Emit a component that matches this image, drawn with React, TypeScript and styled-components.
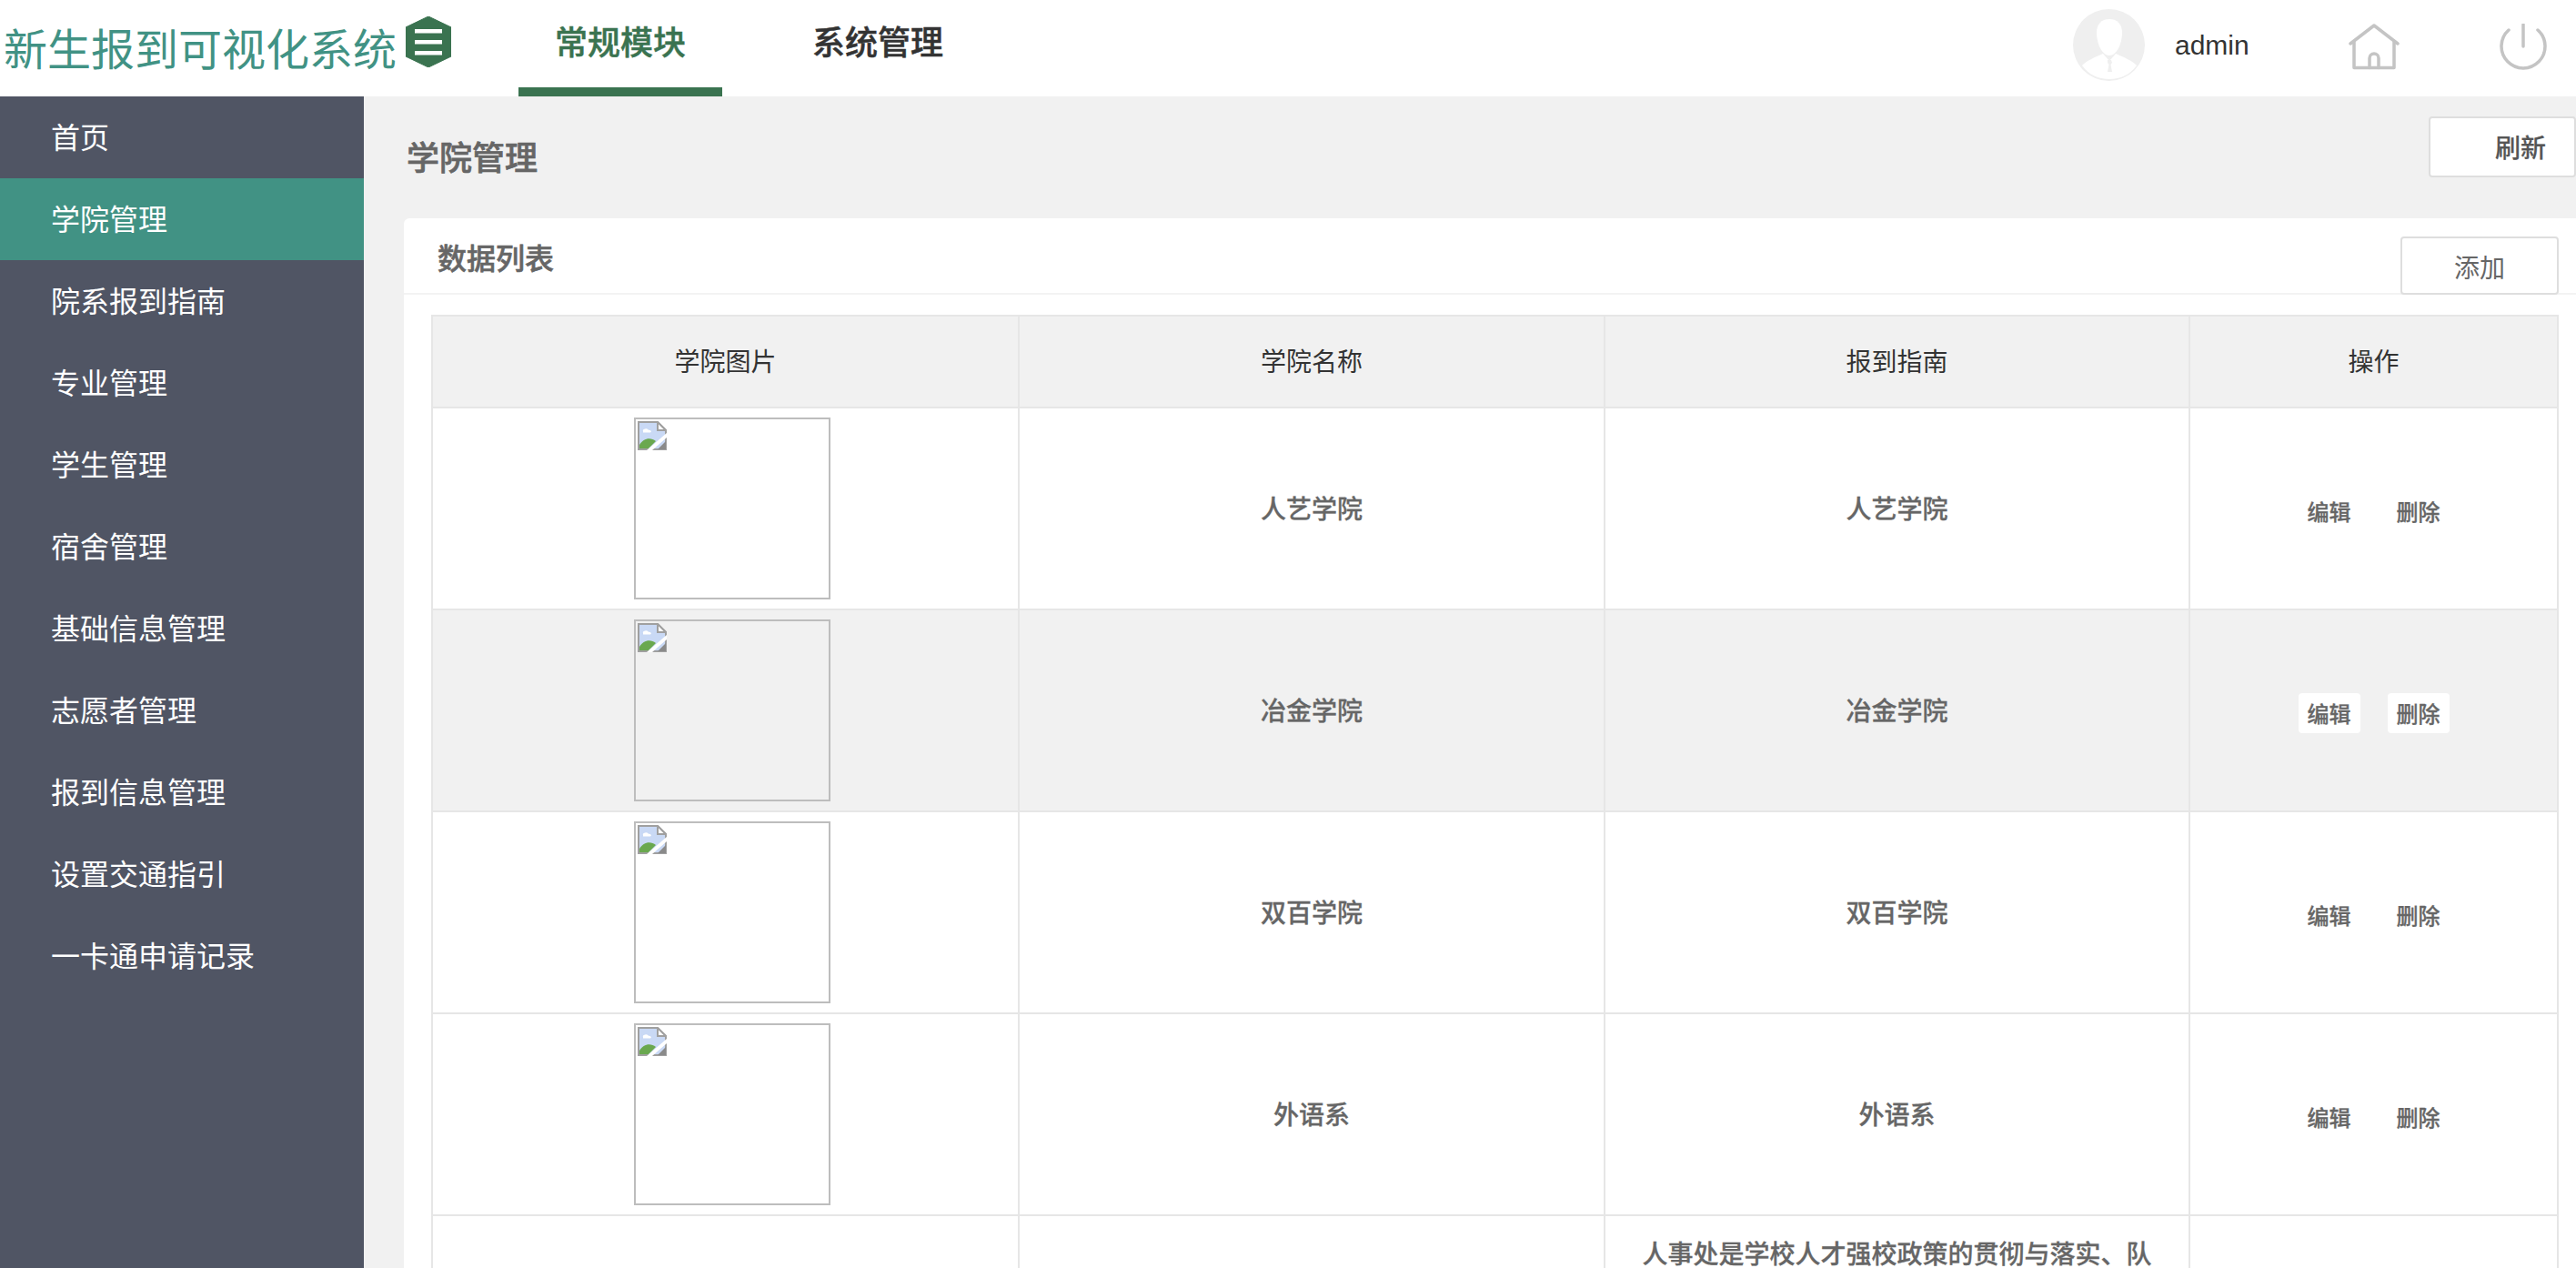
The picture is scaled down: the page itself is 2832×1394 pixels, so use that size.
import * as React from "react";
import styled, { createGlobalStyle } from "styled-components";

const cjk = `"Noto Sans CJK SC", "Liberation Sans", sans-serif`;

const GlobalStyle = createGlobalStyle`
  html, body {
    margin: 0;
    height: 100%;
    overflow: hidden;
    background: #f1f1f1;
    font-family: ${cjk};
  }
`;

const Page = styled.div`
  display: flex;
  flex-direction: column;
  height: 1394px;
  overflow: hidden;
`;

const Header = styled.header`
  display: flex;
  align-items: stretch;
  flex: 0 0 106px;
  background: #fff;
`;

const Brand = styled.div`
  display: flex;
  align-items: flex-start;
  width: 570px;
  padding-left: 4px;
  box-sizing: border-box;
`;

const BrandName = styled.div`
  font-size: 48px;
  line-height: 48px;
  margin-top: 27px;
  color: #419284;
`;

const BrandMark = styled.svg`
  width: 50px;
  height: 56px;
  margin: 18px 0 0 10px;
`;

const Tab = styled.div<{ $active?: boolean }>`
  box-sizing: border-box;
  width: 224px;
  margin-right: 59px;
  text-align: center;
  font-size: 36px;
  font-weight: 500;
  line-height: 36px;
  padding-top: 26px;
  color: ${(p) => (p.$active ? "#3a7350" : "#333")};
  -webkit-text-stroke: 0.5px currentColor;
  border-bottom: 10px solid ${(p) => (p.$active ? "#3a7350" : "transparent")};
`;

const HeaderRight = styled.div`
  display: flex;
  align-items: center;
  margin-left: auto;
`;

const Avatar = styled.svg`
  width: 79px;
  height: 79px;
  margin: 0 33px 7px 0;
`;

const UserName = styled.span`
  font-family: "Liberation Sans", sans-serif;
  font-size: 30px;
  color: #333;
  width: 191px;
  margin-bottom: 6px;
`;

const HomeIcon = styled.svg`
  width: 56px;
  height: 54px;
  margin-right: 110px;
`;

const PowerIcon = styled.svg`
  width: 52px;
  height: 54px;
  margin-right: 32px;
`;

const Body = styled.div`
  display: flex;
  flex: 1;
  min-height: 0;
`;

const Sidebar = styled.nav`
  flex: 0 0 400px;
  background: #505564;
`;

const SideItem = styled.div<{ $active?: boolean }>`
  height: 90px;
  line-height: 86px;
  padding-left: 56px;
  font-size: 32px;
  color: #fff;
  background: ${(p) => (p.$active ? "#419284" : "transparent")};
`;

const Main = styled.main`
  flex: 1;
  min-width: 0;
  padding-left: 44px;
  overflow: hidden;
`;

const TitleBar = styled.div`
  display: flex;
  align-items: flex-start;
  justify-content: space-between;
  height: 134px;
  padding-left: 3px;
`;

const PageTitle = styled.h1`
  margin: 44px 0 0;
  font-size: 36px;
  line-height: 42px;
  font-weight: 500;
  color: #666;
  -webkit-text-stroke: 0.7px currentColor;
`;

const RefreshButton = styled.div`
  box-sizing: border-box;
  width: 162px;
  height: 67px;
  margin-top: 22px;
  padding-left: 71px;
  line-height: 63px;
  font-size: 28px;
  font-weight: 500;
  color: #555;
  -webkit-text-stroke: 0.2px currentColor;
  background: #fff;
  border: 2px solid #dedede;
  border-radius: 4px;
`;

const Card = styled.section`
  background: #fff;
  border-radius: 6px 0 0 0;
  padding-bottom: 40px;
`;

const CardHeader = styled.div`
  display: flex;
  align-items: flex-start;
  justify-content: space-between;
  height: 84px;
  padding: 20px 19px 0 37px;
  box-sizing: border-box;
  border-bottom: 2px solid #f3f3f3;
`;

const CardTitle = styled.h2`
  margin: 2px 0 0;
  font-size: 32px;
  line-height: 40px;
  font-weight: 500;
  color: #666;
  -webkit-text-stroke: 0.6px currentColor;
`;

const AddButton = styled.div`
  box-sizing: border-box;
  width: 174px;
  height: 64px;
  text-align: center;
  line-height: 62px;
  font-size: 28px;
  color: #666;
  background: #fff;
  border: 2px solid #dedede;
  border-radius: 4px;
`;

const TableWrap = styled.div`
  padding: 22px 19px 0 30px;
`;

const Table = styled.table`
  width: 100%;
  table-layout: fixed;
  border-collapse: collapse;
  font-size: 28px;
  text-align: center;
  th, td {
    border: 2px solid #e6e6e6;
    padding: 0;
  }
  th:nth-child(1) { width: 643px; }
  th:nth-child(2) { width: 642px; }
  th:nth-child(3) { width: 641px; }
`;

const HeadCell = styled.th`
  height: 69px;
  font-weight: 400;
  color: #333;
  background: #f1f1f1;
  line-height: 36px;
  vertical-align: top;
  padding-top: 30px !important;
`;

const Row = styled.tr<{ $shaded?: boolean }>`
  height: 222px;
  background: ${(p) => (p.$shaded ? "#f1f1f1" : "#fff")};
`;

const TextCell = styled.td`
  color: #666;
  font-weight: 500;
  -webkit-text-stroke: 0.3px currentColor;
  padding-bottom: 3px !important;
`;

const LongTextCell = styled(TextCell)`
  vertical-align: top;
  padding: 18px 30px 0 !important;
  line-height: 44px;
`;

const Picture = styled.div`
  box-sizing: border-box;
  width: 216px;
  height: 200px;
  margin: 0 0 0 221px;
  padding: 2px;
  border: 2px solid #bdbdbd;
`;

const BrokenIcon = styled.svg`
  display: block;
  width: 32px;
  height: 32px;
`;

const ActionRow = styled.div`
  display: flex;
  justify-content: center;
  gap: 30px;
  padding-top: 5px;
`;

const ActionButton = styled.span<{ $raised?: boolean }>`
  width: 68px;
  height: 44px;
  line-height: 44px;
  font-size: 24px;
  font-weight: 500;
  color: #666;
  -webkit-text-stroke: 0.3px currentColor;
  border-radius: 4px;
  background: ${(p) => (p.$raised ? "#fff" : "transparent")};
`;

const menu = [
  "首页",
  "学院管理",
  "院系报到指南",
  "专业管理",
  "学生管理",
  "宿舍管理",
  "基础信息管理",
  "志愿者管理",
  "报到信息管理",
  "设置交通指引",
  "一卡通申请记录",
];

const colleges = ["人艺学院", "冶金学院", "双百学院", "外语系"];

function Broken() {
  return (
    <BrokenIcon viewBox="0 0 16 16">
      <path d="M0.5 0.5H11L15.5 5V15.5H0.5Z" fill="#c9d9f5" stroke="#a0a0a0" />
      <path d="M11 0.5V5H15.5Z" fill="#fff" stroke="#a0a0a0" />
      <path d="M3 5.5a1.5 1 0 0 1 3-.6a1.2 .8 0 0 1 1 1.4H3Z" fill="#fff" />
      <path d="M1 15V13C3 9.5 7 8.5 10 11L6 15Z" fill="#6aa84f" />
      <path d="M5 16L16 6.5V9L8 16Z" fill="#fff" />
      <path d="M11 15.5L15.5 11V15.5Z" fill="#8a8a8a" />
    </BrokenIcon>
  );
}

export default function App() {
  return (
    <Page>
      <GlobalStyle />
      <Header>
        <Brand>
          <BrandName>新生报到可视化系统</BrandName>
          <BrandMark viewBox="0 0 50 56">
            <path d="M25 0L50 12V44L25 56L0 44V12Z" fill="#3a7350" stroke="#3a7350" strokeLinejoin="round" />
            <rect x="10" y="14" width="30" height="4.500" fill="#fff" />
            <rect x="10" y="26" width="30" height="4.500" fill="#fff" />
            <rect x="10" y="38" width="30" height="4.500" fill="#fff" />
          </BrandMark>
        </Brand>
        <Tab $active>常规模块</Tab>
        <Tab>系统管理</Tab>
        <HeaderRight>
          <Avatar viewBox="0 0 79 79">
            <circle cx="39.5" cy="39.5" r="39.5" fill="#efefef" />
            <path d="M40 11c9 0 14 6 14 15c0 12-6 25-14 25s-14-13-14-25c0-9 5-15 14-15Z" fill="#fff" />
            <path d="M10 62c4-5 14-9 23-13l7 8l7-8c9 4 19 8 23 13c-7 10-18 15-30 15S17 72 10 62Z" fill="#fff" />
            <path d="M38 56h4l1 3l-1.500 2l1.500 8h-5l1.500-8l-1.500-2Z" fill="#efefef" />
          </Avatar>
          <UserName>admin</UserName>
          <HomeIcon viewBox="0 0 56 54" fill="none" stroke="#c4c4c4" strokeWidth="3.500" strokeLinejoin="round" strokeLinecap="round">
            <path d="M2 22L28 2L54 22" />
            <path d="M6 20V48.500H50V20" />
            <path d="M23 48.500V38a5 5 0 0 1 10 0V48.500" />
          </HomeIcon>
          <PowerIcon viewBox="0 0 52 54" fill="none" stroke="#c4c4c4" strokeWidth="3.500" strokeLinecap="round">
            <path d="M26 1V25" />
            <path d="M10 7A24 24 0 1 0 42 7" />
          </PowerIcon>
        </HeaderRight>
      </Header>
      <Body>
        <Sidebar>
          {menu.map((label) => (
            <SideItem key={label} $active={label === "学院管理"}>
              {label}
            </SideItem>
          ))}
        </Sidebar>
        <Main>
          <TitleBar>
            <PageTitle>学院管理</PageTitle>
            <RefreshButton>刷新</RefreshButton>
          </TitleBar>
          <Card>
            <CardHeader>
              <CardTitle>数据列表</CardTitle>
              <AddButton>添加</AddButton>
            </CardHeader>
            <TableWrap>
              <Table>
                <thead>
                  <tr>
                    <HeadCell>学院图片</HeadCell>
                    <HeadCell>学院名称</HeadCell>
                    <HeadCell>报到指南</HeadCell>
                    <HeadCell>操作</HeadCell>
                  </tr>
                </thead>
                <tbody>
                  {colleges.map((name, i) => (
                    <Row key={name} $shaded={i === 1}>
                      <td>
                        <Picture>
                          <Broken />
                        </Picture>
                      </td>
                      <TextCell>{name}</TextCell>
                      <TextCell>{name}</TextCell>
                      <td>
                        <ActionRow>
                          <ActionButton $raised={i === 1}>编辑</ActionButton>
                          <ActionButton $raised={i === 1}>删除</ActionButton>
                        </ActionRow>
                      </td>
                    </Row>
                  ))}
                  <Row>
                    <td />
                    <td />
                    <LongTextCell>人事处是学校人才强校政策的贯彻与落实、队</LongTextCell>
                    <td />
                  </Row>
                </tbody>
              </Table>
            </TableWrap>
          </Card>
        </Main>
      </Body>
    </Page>
  );
}
